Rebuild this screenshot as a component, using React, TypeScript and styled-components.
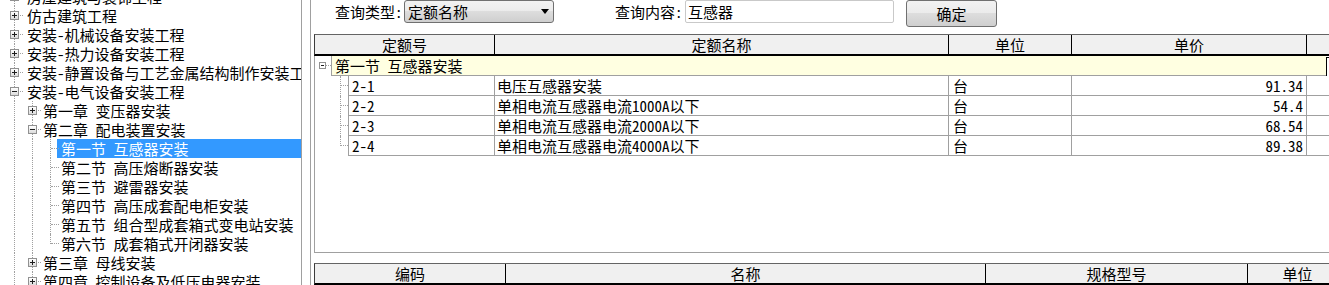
import React from 'react';
import styled, { createGlobalStyle } from 'styled-components';

const FONT = `"Noto Sans Mono CJK SC", "Noto Sans CJK SC", "Liberation Mono", monospace`;

const GlobalStyle = createGlobalStyle`
  html, body { margin: 0; padding: 0; background: #fff; }
  body { font-family: ${FONT}; font-size: 15px; color: #000; }
`;

const Screen = styled.div`
  display: flex;
  width: 1329px;
  height: 285px;
  overflow: hidden;
  background: #fff;
`;

/* ---------- tree ---------- */
const TreePane = styled.div`
  flex: 0 0 301px;
  border-right: 1px solid #a0a0a0;
  overflow: hidden;
`;

const TreeList = styled.div`
  margin-top: -13px;
  padding-left: 5px;
`;

const TreeRow = styled.div`
  display: flex;
  height: 19px;
  white-space: nowrap;
`;

const Guide = styled.span<{ $line: boolean }>`
  flex: 0 0 18px;
  position: relative;
  &::before {
    content: '';
    display: ${p => (p.$line ? 'block' : 'none')};
    position: absolute;
    left: 9px;
    top: 0;
    height: 100%;
    border-left: 1px dotted #a0a0a0;
  }
`;

const Connector = styled.span<{ $last: boolean }>`
  flex: 0 0 18px;
  position: relative;
  &::before {
    content: '';
    position: absolute;
    left: 9px;
    top: 0;
    height: ${p => (p.$last ? '10px' : '100%')};
    border-left: 1px dotted #a0a0a0;
  }
  &::after {
    content: '';
    position: absolute;
    left: 10px;
    top: 9px;
    width: 8px;
    border-top: 1px dotted #a0a0a0;
  }
`;

const ToggleBox = styled.span<{ $open: boolean; $size: number }>`
  position: absolute;
  z-index: 1;
  box-sizing: border-box;
  width: ${p => p.$size}px;
  height: ${p => p.$size}px;
  left: ${p => 9 - (p.$size - 1) / 2}px;
  top: ${p => 9 - (p.$size - 1) / 2}px;
  border: 1px solid #919191;
  background: linear-gradient(#ffffff, #dcdcdc);
  &::before {
    content: '';
    position: absolute;
    left: 1px;
    right: 1px;
    top: ${p => (p.$size - 3) / 2}px;
    height: 1px;
    background: #1e1e1e;
  }
  &::after {
    content: '';
    display: ${p => (p.$open ? 'none' : 'block')};
    position: absolute;
    top: 1px;
    bottom: 1px;
    left: ${p => (p.$size - 3) / 2}px;
    width: 1px;
    background: #1e1e1e;
  }
`;

const TreeLabel = styled.span<{ $selected: boolean; $root: boolean }>`
  flex: ${p => (p.$selected ? '1 0 auto' : '0 0 auto')};
  margin-left: ${p => (p.$root ? '0' : '-2px')};
  padding: 0 4px;
  line-height: 19px;
  background: ${p => (p.$selected ? '#3399ff' : 'transparent')};
  color: ${p => (p.$selected ? '#fff' : '#000')};
`;

/* ---------- main ---------- */
const MainPane = styled.div`
  flex: 1 1 auto;
  min-width: 0;
  margin-left: 8px;
  border-left: 1px solid #a0a0a0;
  padding-left: 3px;
  display: flex;
  flex-direction: column;
  overflow: hidden;
`;

const Toolbar = styled.div`
  display: flex;
  align-items: flex-start;
  height: 34px;
  flex: 0 0 34px;
  padding-left: 21px;
`;

const FieldLabel = styled.span<{ $w: number }>`
  flex: 0 0 ${p => p.$w}px;
  height: 23px;
  line-height: 23px;
  white-space: nowrap;
`;

const Select = styled.div`
  flex: 0 0 150px;
  height: 23px;
  box-sizing: border-box;
  margin-right: 61px;
  border: 1px solid #707070;
  border-radius: 3px;
  background: linear-gradient(#f2f2f2 0%, #ebebeb 50%, #dddddd 50%, #cfcfcf 100%);
  display: flex;
  align-items: center;
  justify-content: space-between;
  padding: 0 4px 0 3px;
  line-height: 21px;
`;

const Arrow = styled.span`
  width: 0;
  height: 0;
  border-left: 4px solid transparent;
  border-right: 4px solid transparent;
  border-top: 5px solid #000;
`;

const TextInput = styled.div`
  flex: 0 0 209px;
  height: 23px;
  box-sizing: border-box;
  border: 1px solid #c9c9c9;
  border-radius: 2px;
  padding-left: 2px;
  line-height: 21px;
  background: #fff;
`;

const Button = styled.div`
  flex: 0 0 91px;
  height: 27px;
  box-sizing: border-box;
  margin-left: 12px;
  border: 1px solid #707070;
  border-radius: 3px;
  background: linear-gradient(#f2f2f2 0%, #ebebeb 50%, #dddddd 50%, #cfcfcf 100%);
  text-align: center;
  line-height: 25px;
`;

const GridPanel = styled.div`
  display: flex;
  flex-direction: column;
  flex: 0 0 219px;
  width: 1015px;
`;

const HeaderRow = styled.div<{ $cols: string }>`
  display: grid;
  grid-template-columns: ${p => p.$cols};
  flex: 0 0 22px;
  height: 22px;
  box-sizing: border-box;
  border-top: 1px solid #646464;
  border-left: 1px solid #3c3c3c;
  border-bottom: 2px solid #000;
  background: #f0f0f0;
  overflow: hidden;
`;

const HeaderCell = styled.div`
  border-right: 1px solid #000;
  text-align: center;
  line-height: 19px;
  white-space: nowrap;
  overflow: hidden;
`;

const GridBody = styled.div`
  flex: 1 1 auto;
  box-sizing: border-box;
  border-left: 1px solid #a0a0a0;
  border-bottom: 1px solid #a0a0a0;
  overflow: hidden;
`;

const GroupRow = styled.div`
  display: flex;
  height: 20px;
`;

const GroupToggle = styled.span`
  flex: 0 0 16px;
  position: relative;
  &::after {
    content: '';
    position: absolute;
    left: 11px;
    top: 9px;
    width: 5px;
    border-top: 1px dotted #a0a0a0;
  }
`;

const SmallBox = styled.span`
  position: absolute;
  left: 4px;
  top: 6px;
  width: 7px;
  height: 7px;
  box-sizing: border-box;
  border: 1px solid #919191;
  background: #fff;
  &::before {
    content: '';
    position: absolute;
    left: 1px;
    right: 1px;
    top: 2px;
    height: 1px;
    background: #1e1e1e;
  }
`;

const GroupLabel = styled.span`
  flex: 1 1 auto;
  box-sizing: border-box;
  background: #ffffe1;
  border-left: 1px solid #a0a0a0;
  border-bottom: 1px solid #a0a0a0;
  padding-left: 3px;
  line-height: 19px;
  white-space: nowrap;
`;

const ScrollEdge = styled.span`
  flex: 0 0 2px;
  margin-top: 1px;
  border-left: 1px solid #000;
  border-top: 1px solid #000;
`;

const DataRow = styled.div`
  display: flex;
  height: 20px;
`;

const RowConnector = styled.span<{ $last: boolean }>`
  flex: 0 0 33px;
  position: relative;
  &::before {
    content: '';
    position: absolute;
    left: 25px;
    top: 0;
    height: ${p => (p.$last ? '10px' : '100%')};
    border-left: 1px dotted #a0a0a0;
  }
  &::after {
    content: '';
    position: absolute;
    left: 26px;
    top: 9px;
    width: 7px;
    border-top: 1px dotted #a0a0a0;
  }
`;

const DataCell = styled.span<{ $w?: number; $align?: 'left' | 'right'; $pad: number; $first?: boolean }>`
  flex: ${p => (p.$w ? `0 0 ${p.$w}px` : '1 1 auto')};
  box-sizing: border-box;
  border-left: ${p => (p.$first ? '1px solid #a0a0a0' : 'none')};
  border-right: ${p => (p.$w ? '1px solid #a0a0a0' : 'none')};
  border-bottom: 1px solid #a0a0a0;
  text-align: ${p => p.$align || 'left'};
  padding: ${p => (p.$align === 'right' ? `0 ${p.$pad}px 0 0` : `0 0 0 ${p.$pad}px`)};
  line-height: 19px;
  white-space: nowrap;
  overflow: hidden;
`;

const BottomHeader = styled(HeaderRow)`
  margin-top: 10px;
  width: 1100px;
`;

/* ---------- data ---------- */
type Node = {
  level: number;
  label: string;
  toggle?: 'plus' | 'minus';
  selected?: boolean;
  last?: boolean;
  guides: boolean[];
};

const tree: Node[] = [
  { level: 0, label: '房屋建筑与装饰工程', toggle: 'plus', guides: [] },
  { level: 0, label: '仿古建筑工程', toggle: 'plus', guides: [] },
  { level: 0, label: '安装-机械设备安装工程', toggle: 'plus', guides: [] },
  { level: 0, label: '安装-热力设备安装工程', toggle: 'plus', guides: [] },
  { level: 0, label: '安装-静置设备与工艺金属结构制作安装工程', toggle: 'plus', guides: [] },
  { level: 0, label: '安装-电气设备安装工程', toggle: 'minus', guides: [] },
  { level: 1, label: '第一章 变压器安装', toggle: 'plus', guides: [true] },
  { level: 1, label: '第二章 配电装置安装', toggle: 'minus', guides: [true] },
  { level: 2, label: '第一节 互感器安装', selected: true, guides: [true, true] },
  { level: 2, label: '第二节 高压熔断器安装', guides: [true, true] },
  { level: 2, label: '第三节 避雷器安装', guides: [true, true] },
  { level: 2, label: '第四节 高压成套配电柜安装', guides: [true, true] },
  { level: 2, label: '第五节 组合型成套箱式变电站安装', guides: [true, true] },
  { level: 2, label: '第六节 成套箱式开闭器安装', last: true, guides: [true, true] },
  { level: 1, label: '第三章 母线安装', toggle: 'plus', guides: [true] },
  { level: 1, label: '第四章 控制设备及低压电器安装', toggle: 'plus', guides: [true] },
];

const rows = [
  { code: '2-1', name: '电压互感器安装', unit: '台', price: '91.34' },
  { code: '2-2', name: '单相电流互感器电流1000A以下', unit: '台', price: '54.4' },
  { code: '2-3', name: '单相电流互感器电流2000A以下', unit: '台', price: '68.54' },
  { code: '2-4', name: '单相电流互感器电流4000A以下', unit: '台', price: '89.38' },
];

export default function App() {
  return (
    <>
      <GlobalStyle />
      <Screen>
        <TreePane>
          <TreeList>
            {tree.map((n, i) => (
              <TreeRow key={i}>
                {n.guides.map((g, j) => (
                  <Guide key={j} $line={g} />
                ))}
                <Connector $last={!!n.last}>
                  {n.toggle && <ToggleBox $open={n.toggle === 'minus'} $size={9} />}
                </Connector>
                <TreeLabel $selected={!!n.selected} $root={n.level === 0}>
                  {n.label}
                </TreeLabel>
              </TreeRow>
            ))}
          </TreeList>
        </TreePane>

        <MainPane>
          <Toolbar>
            <FieldLabel $w={69}>查询类型:</FieldLabel>
            <Select>
              <span>定额名称</span>
              <Arrow />
            </Select>
            <FieldLabel $w={70}>查询内容:</FieldLabel>
            <TextInput>互感器</TextInput>
            <Button>确定</Button>
          </Toolbar>

          <GridPanel>
            <HeaderRow $cols="180px 454px 123px 235px 100px">
              <HeaderCell>定额号</HeaderCell>
              <HeaderCell>定额名称</HeaderCell>
              <HeaderCell>单位</HeaderCell>
              <HeaderCell>单价</HeaderCell>
              <HeaderCell />
            </HeaderRow>
            <GridBody>
              <GroupRow>
                <GroupToggle>
                  <SmallBox />
                </GroupToggle>
                <GroupLabel>第一节 互感器安装</GroupLabel>
                <ScrollEdge />
              </GroupRow>
              {rows.map((r, i) => (
                <DataRow key={r.code}>
                  <RowConnector $last={i === rows.length - 1} />
                  <DataCell $w={147} $pad={3} $first>{r.code}</DataCell>
                  <DataCell $w={454} $pad={2}>{r.name}</DataCell>
                  <DataCell $w={123} $pad={4}>{r.unit}</DataCell>
                  <DataCell $w={235} $pad={3} $align="right">{r.price}</DataCell>
                  <DataCell $pad={0} />
                </DataRow>
              ))}
            </GridBody>
          </GridPanel>

          <BottomHeader $cols="191px 480px 262px 100px">
            <HeaderCell>编码</HeaderCell>
            <HeaderCell>名称</HeaderCell>
            <HeaderCell>规格型号</HeaderCell>
            <HeaderCell>单位</HeaderCell>
          </BottomHeader>
        </MainPane>
      </Screen>
    </>
  );
}
